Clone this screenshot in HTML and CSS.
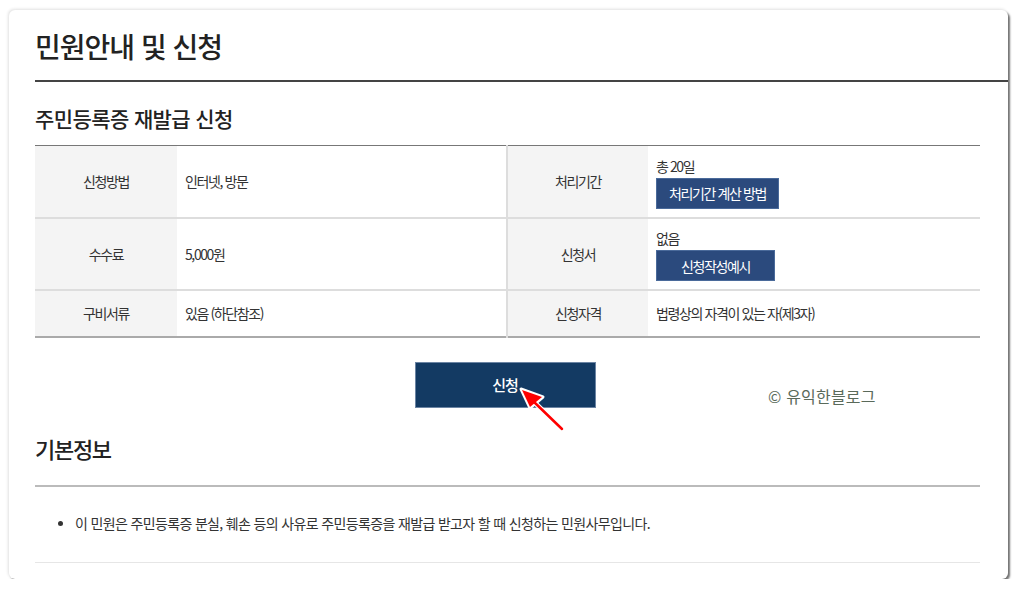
FILE: index.html
```html
<!DOCTYPE html>
<html lang="ko">
<head>
<meta charset="utf-8">
<link rel="stylesheet" href="styles.css">
</head>
<body>
<div class="card">
  <h1 class="page-title">민원안내 및 신청</h1>
  <h2 class="sub-title">주민등록증 재발급 신청</h2>
  <table class="info">
    <colgroup>
      <col class="c-label1"><col class="c-val1"><col class="c-label2"><col class="c-val2">
    </colgroup>
    <tr class="r-tall">
      <th>신청방법</th>
      <td>인터넷, 방문</td>
      <th class="div">처리기간</th>
      <td><div class="line">총 20일</div><a class="mini-btn w123">처리기간 계산 방법</a></td>
    </tr>
    <tr class="r-tall">
      <th>수수료</th>
      <td>5,000원</td>
      <th class="div">신청서</th>
      <td><div class="line">없음</div><a class="mini-btn w119">신청작성예시</a></td>
    </tr>
    <tr class="r-short">
      <th>구비서류</th>
      <td>있음 (하단참조)</td>
      <th class="div">신청자격</th>
      <td>법령상의 자격이 있는 자(제3자)</td>
    </tr>
  </table>
  <div class="apply-row">
    <a class="apply-btn">신청</a>
    <svg class="arrow" width="60" height="60" viewBox="0 0 60 60">
      <line x1="51" y1="50" x2="22" y2="22" stroke="#ffffff" stroke-width="5" stroke-linecap="round"/>
      <polygon points="10,10 32,18 19,29" fill="#ffffff" stroke="#ffffff" stroke-width="3" stroke-linejoin="round"/>
      <line x1="51" y1="50" x2="22" y2="22" stroke="#ff0000" stroke-width="2.5" stroke-linecap="round"/>
      <polygon points="11,11 31,18 19,28" fill="#ff0000"/>
    </svg>
    <span class="watermark">© 유익한블로그</span>
  </div>
  <h2 class="section-title">기본정보</h2>
  <ul class="basic">
    <li>이 민원은 주민등록증 분실, 훼손 등의 사유로 주민등록증을 재발급 받고자 할 때 신청하는 민원사무입니다.</li>
  </ul>
</div>
</body>
</html>
```
FILE: styles.css
```css
* { box-sizing: border-box; }
html, body { margin: 0; padding: 0; background: #ffffff; }
body {
  font-family: "Noto Sans CJK KR", "Noto Sans", sans-serif;
  color: #333333;
}
.card {
  margin: 10px 0 0 9px;
  width: 999px;
  height: 569px;
  background: #ffffff;
  border-radius: 6px;
  box-shadow: 2px 2px 2px rgba(0,0,0,0.55), -1px -1px 3px rgba(0,0,0,0.12);
  padding: 0 28px 0 26px;
  position: relative;
}
.page-title {
  margin: 0 -28px 0 0;
  padding: 18px 0 16px;
  font-size: 28px;
  line-height: 36px;
  font-weight: 500;
  letter-spacing: -1px;
  color: #222222;
  border-bottom: 2px solid #444444;
}
.sub-title {
  margin: 22px 0 13px;
  font-size: 21px;
  line-height: 28px;
  font-weight: 500;
  letter-spacing: -0.6px;
  color: #222222;
}
.info {
  width: 945px;
  border-collapse: collapse;
  border-top: 1px solid #777777;
  border-bottom: 2px solid #aaaaaa;
  font-size: 14px;
  letter-spacing: -1.4px;
  table-layout: fixed;
}
.c-label1 { width: 142px; }
.c-val1 { width: 330px; }
.c-label2 { width: 141px; }
.c-val2 { width: auto; }
.info tr + tr { border-top: 2px solid #dddddd; }
.info th {
  background: #f4f4f4;
  font-weight: 400;
  text-align: center;
  color: #333333;
  padding: 0;
}
.info th.div { border-left: 2px solid #dddddd; }
.info td {
  padding: 0 8px;
  color: #333333;
  vertical-align: middle;
}
.r-tall { height: 72px; }
.r-short { height: 47px; }
.line { line-height: 20px; padding-top: 2px; }
.mini-btn {
  display: inline-flex;
  align-items: center;
  justify-content: center;
  height: 31px;
  margin-top: 2px;
  background: #2b4a7d;
  color: #ffffff;
  font-size: 14px;
  letter-spacing: -1.4px;
  border: 1px solid #4a6a9a;
}
.w123 { width: 123px; }
.w119 { width: 119px; }
.apply-row {
  position: relative;
  margin-top: 24px;
  width: 945px;
  display: flex;
  justify-content: center;
}
.apply-btn {
  display: flex;
  align-items: center;
  justify-content: center;
  width: 181px;
  height: 46px;
  margin-right: 5px;
  background: #133a63;
  border: 1px solid #6b84a3;
  color: #ffffff;
  font-size: 15px;
  font-weight: 500;
  letter-spacing: -1px;
}
.arrow {
  position: absolute;
  left: 476px;
  top: 17px;
}
.watermark {
  position: absolute;
  left: 733px;
  top: 22px;
  font-size: 16px;
  color: #5a6a5a;
  font-weight: 400;
  letter-spacing: 0.2px;
}
.section-title {
  margin: 25px 0 0;
  padding-bottom: 22px;
  font-size: 22px;
  line-height: 30px;
  font-weight: 500;
  letter-spacing: -1.3px;
  color: #222222;
  border-bottom: 2px solid #bbbbbb;
  width: 945px;
}
.basic {
  margin: 0;
  padding: 26px 0 29px 40px;
  width: 945px;
  border-bottom: 1px solid #e6e6e6;
  font-size: 14px;
  line-height: 20px;
  letter-spacing: -0.65px;
  color: #333333;
}
.basic li::marker { font-size: 13px; }
```
